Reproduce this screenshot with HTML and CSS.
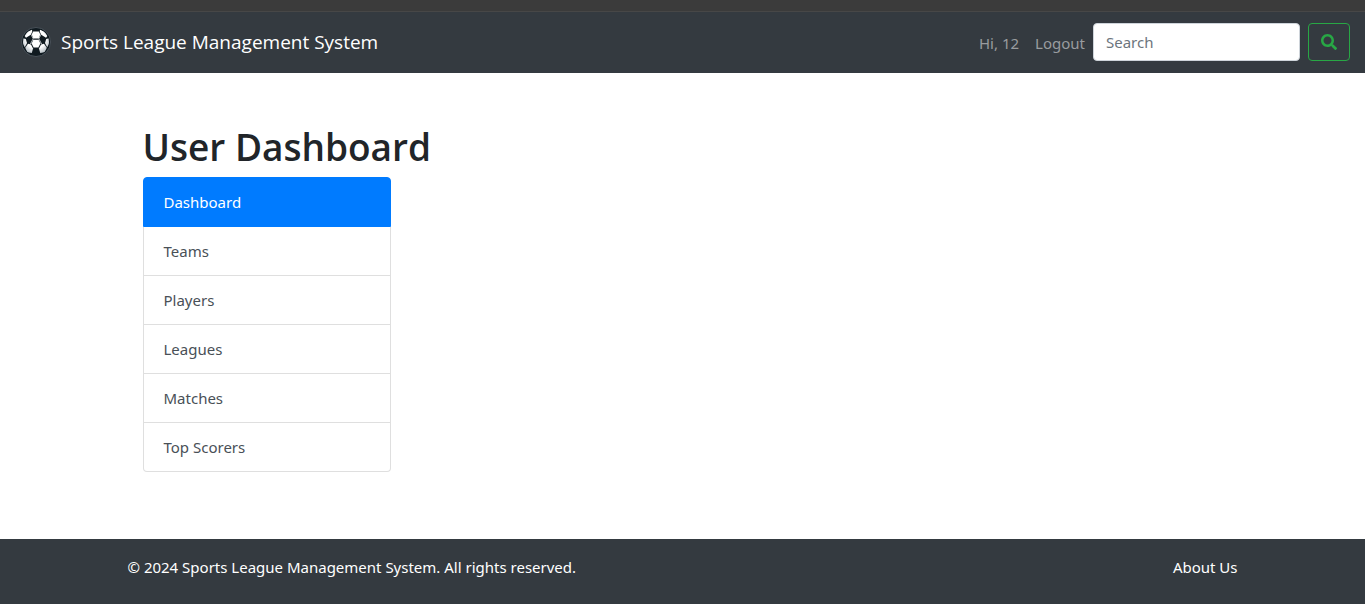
FILE: index.html
```html
<!DOCTYPE html>
<html lang="en">
<head>
  <meta charset="utf-8">
  <meta name="viewport" content="width=device-width, initial-scale=1">
  <title>Sports League Management System</title>
  <link rel="stylesheet" href="styles.css">
</head>
<body>
  <div class="top-strip"></div>
  <header class="navbar">
    <a class="brand" href="#">
      <svg class="brand-logo" viewBox="0 0 30 30" aria-hidden="true">
        <defs>
          <radialGradient id="leather" gradientUnits="userSpaceOnUse" cx="15" cy="12" r="16">
            <stop offset="0.6" stop-color="#ffffff"/>
            <stop offset="1" stop-color="#aab3ba"/>
          </radialGradient>
          <clipPath id="ball"><circle cx="15" cy="15" r="13"/></clipPath>
        </defs>
        <circle cx="15" cy="15" r="14.5" fill="#101a20" stroke="#5a636b" stroke-width="0.7"/>
        <g clip-path="url(#ball)">
          <g fill="url(#leather)">
            <path d="M12.2 4.6L17.8 4.6L19.3 7.6L17.6 11.4L12.4 11.4L10.7 7.6Z"/>
            <path d="M12.4 12.8L17.6 12.8L19.4 16.6L17.4 20.6L12.6 20.6L10.6 16.6Z"/>
            <path d="M6.2 4.4L11 2.6L11.2 4.8L9.8 7.8L5 10.8L3.6 9Z"/>
            <path d="M23.8 4.4L19 2.6L18.8 4.8L20.2 7.8L25 10.8L26.4 9Z"/>
            <path d="M2 11.2L4.8 12L6 16L3.8 20.2L2 17Z"/>
            <path d="M28 11.2L25.2 12L24 16L26.2 20.2L28 17Z"/>
            <path d="M7 16.8L10 17.4L12 21.4L10.8 26L6.2 25.2L4.2 20.8Z"/>
            <path d="M23 16.8L20 17.4L18 21.4L19.2 26L23.8 25.2L25.8 20.8Z"/>
          </g>
          <path d="M10.4 8.2L12.2 11.8L9.4 17M19.6 8.2L17.8 11.8L20.6 17" fill="none" stroke="#dfe4e7" stroke-width="0.8"/>
        </g>
      </svg>
      <span>Sports League Management System</span>
    </a>
    <nav class="nav-links" aria-label="Account">
      <a class="nav-link" href="#">Hi, 12</a>
      <a class="nav-link" href="#">Logout</a>
    </nav>
    <form class="search" role="search">
      <input class="search-input" type="search" placeholder="Search" aria-label="Search">
      <button class="search-button" type="submit" aria-label="Submit search">
        <svg class="search-icon" viewBox="0 0 512 512" aria-hidden="true">
          <path fill="currentColor" d="M505 442.700L405.300 343c-4.500-4.500-10.600-7-17-7H372c27.600-35.300 44-79.700 44-128C416 93.100 322.900 0 208 0S0 93.100 0 208s93.100 208 208 208c48.300 0 92.700-16.400 128-44v16.300c0 6.400 2.500 12.500 7 17l99.700 99.700c9.400 9.400 24.600 9.400 33.900 0l28.300-28.300c9.400-9.400 9.400-24.600.1-34zM208 336c-70.700 0-128-57.200-128-128 0-70.700 57.200-128 128-128 70.700 0 128 57.200 128 128 0 70.700-57.200 128-128 128z"/>
        </svg>
      </button>
    </form>
  </header>

  <main class="container main">
    <h1 class="page-title">User Dashboard</h1>
    <nav class="menu" aria-label="Dashboard">
      <a class="menu-item active" href="#" aria-current="page">Dashboard</a>
      <a class="menu-item" href="#">Teams</a>
      <a class="menu-item" href="#">Players</a>
      <a class="menu-item" href="#">Leagues</a>
      <a class="menu-item" href="#">Matches</a>
      <a class="menu-item" href="#">Top Scorers</a>
    </nav>
  </main>

  <footer class="footer">
    <div class="container footer-row">
      <span>© 2024 Sports League Management System. All rights reserved.</span>
      <a class="footer-link" href="#">About Us</a>
    </div>
  </footer>
</body>
</html>
```

FILE: styles.css
```css
* {
  box-sizing: border-box;
}

body {
  display: flex;
  flex-direction: column;
  min-height: 100vh;
  margin: 0;
  background: #fff;
  color: #212529;
  font-family: "Noto Sans", "Open Sans", sans-serif;
  font-size: 15px;
  line-height: 24px;
}

a {
  color: inherit;
  text-decoration: none;
}

.top-strip {
  height: 12px;
  background: #3b3b3b;
  border-bottom: 1px solid #474747;
}

.navbar {
  display: flex;
  align-items: center;
  padding: 11px 15px 12px 21px;
  background: #343a40;
}

.brand {
  display: flex;
  align-items: center;
  gap: 10px;
  margin-right: auto;
  color: #fff;
  font-family: "Open Sans", "Noto Sans", sans-serif;
  font-size: 19px;
}

.brand-logo {
  width: 30px;
  height: 30px;
}

.nav-links {
  display: flex;
  padding-top: 2px;
}

.nav-link {
  padding: 0 8px;
  color: #999c9f;
}

.search {
  display: flex;
  gap: 8px;
}

.search-input {
  width: 207px;
  height: 38px;
  padding: 6px 12px;
  border: 1px solid #ced4da;
  border-radius: 4px;
  background: #fff;
  color: #495057;
  font: inherit;
}

.search-input::placeholder {
  color: #6c757d;
}

.search-button {
  display: flex;
  align-items: center;
  justify-content: center;
  width: 42px;
  height: 38px;
  padding: 0;
  border: 1px solid #28a745;
  border-radius: 4px;
  background: transparent;
  color: #28a745;
}

.search-icon {
  width: 16px;
  height: 16px;
}

.container {
  width: 100%;
  max-width: 1140px;
  margin: 0 auto;
  padding: 0 15px;
}

.main {
  flex: 1;
  padding: 50px 30px;
}

.page-title {
  margin: 0 0 6px;
  font-family: "Open Sans", "Noto Sans", sans-serif;
  font-size: 37px;
  font-weight: 600;
  line-height: 48px;
}

.menu {
  display: flex;
  flex-direction: column;
  width: 23%;
  min-width: 200px;
}

.menu-item {
  padding: 12px 20px;
  border: 1px solid #dfdfdf;
  border-top: 0;
  color: #495057;
}

.menu-item:first-child {
  border-top: 1px solid #007bff;
  border-radius: 4px 4px 0 0;
}

.menu-item:last-child {
  border-radius: 0 0 4px 4px;
}

.menu-item.active {
  border-color: #007bff;
  background: #007bff;
  color: #fff;
}

.footer {
  padding: 16px 0 25px;
  background: #343a40;
  color: #fff;
}

.footer-row {
  display: flex;
  justify-content: space-between;
}
```
